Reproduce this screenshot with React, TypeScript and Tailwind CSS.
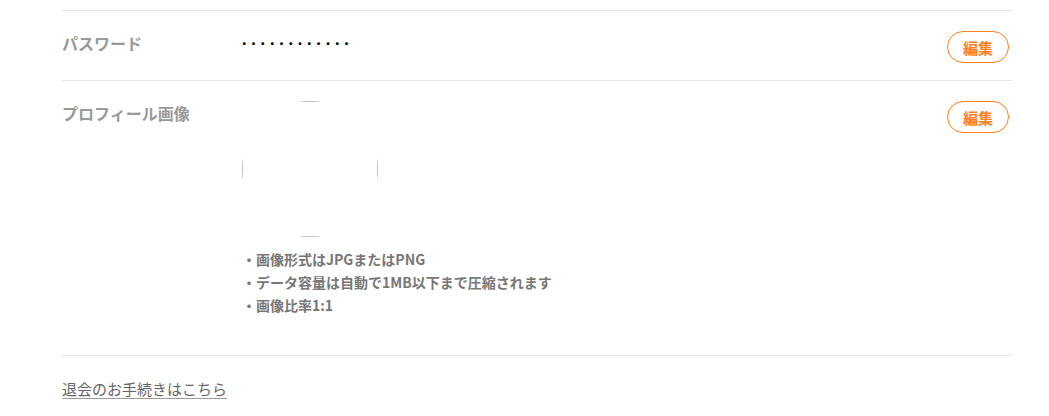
import React from 'react'

const FONT = '"Noto Sans CJK JP", "Noto Sans", sans-serif'

function EditButton() {
  return (
    <button
      type="button"
      className="w-[62px] h-[32px] rounded-full border border-[#ff7f1a] text-[#ff7f1a] text-[15px] font-bold leading-none bg-white"
    >
      編集
    </button>
  )
}

export default function App() {
  const notes = ['画像形式はJPGまたはPNG', 'データ容量は自動で1MB以下まで圧縮されます', '画像比率1:1']

  return (
    <div className="bg-white w-[1049px] h-[416px] pt-[10px] pl-[62px]" style={{ fontFamily: FONT }}>
      <div className="w-[950px]">
        {/* Password */}
        <div className="flex border-t border-[#e6e6e6] pt-[20px] pb-[17px]">
          <div className="w-[180px] pt-[1px] text-[16px] font-bold text-[#999] leading-[22px]">パスワード</div>
          <div className="flex-1 pt-[1px] text-[16px] font-bold leading-[22px] text-black tracking-[4.8px]" style={{ fontFamily: '"Noto Sans", sans-serif' }}>
            ············
          </div>
          <div className="mr-[3px]">
            <EditButton />
          </div>
        </div>

        {/* Profile image */}
        <div className="flex border-t border-[#e6e6e6] pt-[20px] pb-[38px]">
          <div className="w-[180px] pt-[1px] text-[16px] font-bold text-[#999] leading-[22px]">プロフィール画像</div>
          <div className="flex-1">
            <div className="w-[136px] h-[136px] rounded-full overflow-hidden">
              <div className="w-full h-full border border-[#bdbdbd] bg-white" />
            </div>
            <ul className="mt-[11px] text-[14px] font-bold text-[#777] leading-[23px]">
              {notes.map((n) => (
                <li key={n}>・{n}</li>
              ))}
            </ul>
          </div>
          <div className="mr-[3px]">
            <EditButton />
          </div>
        </div>

        {/* Withdraw */}
        <div className="border-t border-[#e6e6e6] pt-[20px]">
          <a href="#" className="text-[15px] text-[#666] underline decoration-[#999] underline-offset-[3px] leading-[22px]">
            退会のお手続きはこちら
          </a>
        </div>
      </div>
    </div>
  )
}
